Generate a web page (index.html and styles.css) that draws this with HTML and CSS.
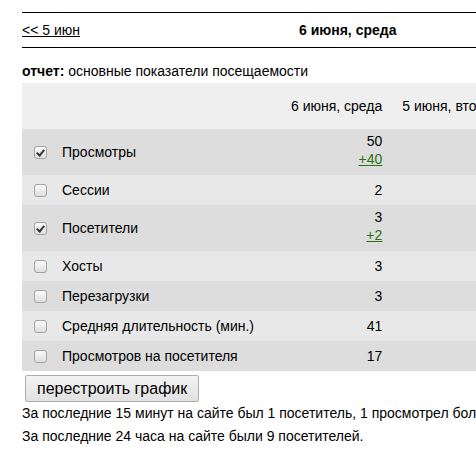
FILE: index.html
```html
<!DOCTYPE html>
<html lang="ru">
<head>
  <meta charset="UTF-8">
  <title>Статистика посещаемости</title>
  <link rel="stylesheet" href="styles.css">
</head>
<body>
  <div class="page">
    <div class="daynav">
      <a href="#" class="prev">&lt;&lt; 5 июн</a>
      <b class="today">6 июня, среда</b>
      <span class="next"></span>
    </div>

    <p class="report"><b>отчет:</b> основные показатели посещаемости</p>

    <form class="stats-form">
      <table class="stats">
        <thead>
          <tr>
            <th class="name"></th>
            <th>6 июня, среда</th>
            <th>5 июня, вторник</th>
            <th>4 июня, понедельник</th>
          </tr>
        </thead>
        <tbody>
          <tr class="odd tall">
            <td class="name"><label><input type="checkbox" checked> Просмотры</label></td>
            <td>50<div class="delta"><a href="#">+40</a></div></td>
            <td>10</td>
            <td>12</td>
          </tr>
          <tr class="even">
            <td class="name"><label><input type="checkbox"> Сессии</label></td>
            <td>2</td>
            <td>3</td>
            <td>4</td>
          </tr>
          <tr class="odd tall">
            <td class="name"><label><input type="checkbox" checked> Посетители</label></td>
            <td>3<div class="delta"><a href="#">+2</a></div></td>
            <td>1</td>
            <td>2</td>
          </tr>
          <tr class="even">
            <td class="name"><label><input type="checkbox"> Хосты</label></td>
            <td>3</td>
            <td>1</td>
            <td>2</td>
          </tr>
          <tr class="odd">
            <td class="name"><label><input type="checkbox"> Перезагрузки</label></td>
            <td>3</td>
            <td>0</td>
            <td>1</td>
          </tr>
          <tr class="even">
            <td class="name"><label><input type="checkbox"> Средняя длительность (мин.)</label></td>
            <td>41</td>
            <td>12</td>
            <td>8</td>
          </tr>
          <tr class="odd">
            <td class="name"><label><input type="checkbox"> Просмотров на посетителя</label></td>
            <td>17</td>
            <td>10</td>
            <td>6</td>
          </tr>
        </tbody>
      </table>
      <button type="button" class="rebuild">перестроить график</button>
    </form>

    <div class="summary">
      <div>За последние 15 минут на сайте был 1 посетитель, 1 просмотрел более одной страницы.</div>
      <div>За последние 24 часа на сайте были 9 посетителей.</div>
    </div>
  </div>
</body>
</html>
```

FILE: styles.css
```css
html {
  overflow: hidden;
}
body {
  margin: 0;
  font-family: "Liberation Sans", Arial, sans-serif;
  font-size: 14px;
  color: #000;
  background: #fff;
}
.page {
  width: 720px;
  padding: 12px 0 0 22px;
}

/* навигация по дням */
.daynav {
  display: flex;
  border-top: 1px solid #000;
  border-bottom: 1px solid #000;
  padding: 9px 0;
  line-height: 16px;
}
.daynav .prev {
  width: 277px;
  color: #000;
}
.daynav .today {
  width: 200px;
}

.report {
  margin: 15px 0 4px;
  line-height: 16px;
}

/* таблица показателей */
.stats {
  border-collapse: collapse;
  line-height: 20px;
}
.stats th {
  background: #efefef;
  font-weight: normal;
  height: 46px;
  padding: 0 10px;
  text-align: right;
  white-space: nowrap;
}
.stats th.name,
.stats td.name {
  width: 237px;
  text-align: left;
  padding: 0 10px 0 12px;
}
.stats td {
  padding: 5px 10px;
  text-align: right;
  vertical-align: middle;
}
.stats tr.tall td {
  padding-top: 2px;
  padding-bottom: 8px;
}
.stats tr.tall td.name {
  padding: 0 10px 0 12px;
}
.stats tr.odd td {
  background: #dddddd;
}
.stats tr.even td {
  background: #e8e8e8;
}
.stats label {
  display: flex;
  align-items: center;
  gap: 15px;
}
.stats input[type="checkbox"] {
  appearance: none;
  -webkit-appearance: none;
  margin: 0;
  width: 13px;
  height: 13px;
  border: 1px solid #a3a3a3;
  border-radius: 3px;
  background: linear-gradient(#fbfbfb, #dedede);
  box-sizing: border-box;
  position: relative;
}
.stats input[type="checkbox"]:checked::after {
  content: "";
  position: absolute;
  left: 3px;
  top: 1px;
  width: 3px;
  height: 6px;
  border: solid #333;
  border-width: 0 2px 2px 0;
  transform: rotate(40deg);
}
.delta {
  line-height: 16px;
}
.delta a {
  color: #2a6f10;
}

.rebuild {
  margin: 4px 0 0 3px;
  height: 27px;
  padding: 0 11px;
  font-family: "Liberation Sans", Arial, sans-serif;
  font-size: 16px;
  color: #000;
  border: 1px solid #adadad;
  border-radius: 2px;
  background: linear-gradient(#f4f4f4, #e1e1e1);
}

.summary {
  line-height: 23px;
  white-space: nowrap;
}
```
